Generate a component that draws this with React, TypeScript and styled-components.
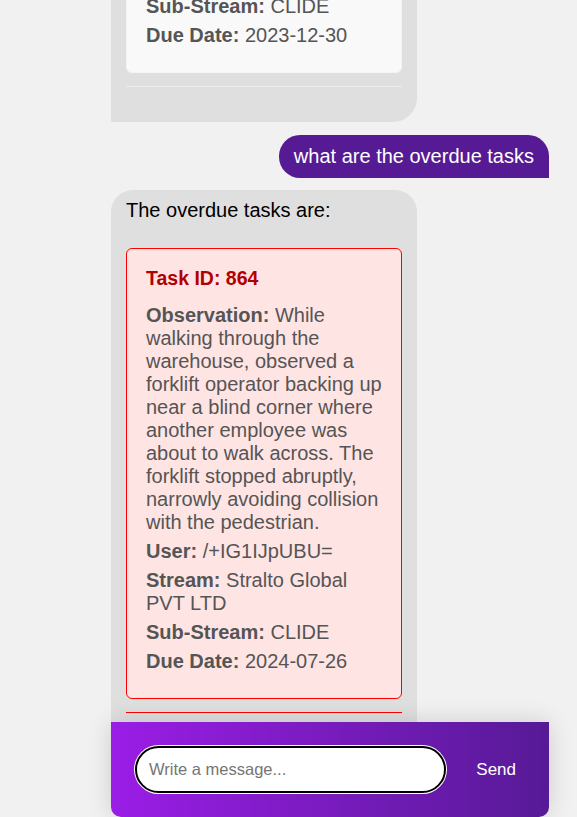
import React from "react";
import styled, { createGlobalStyle } from "styled-components";

const GlobalStyle = createGlobalStyle`
  * { box-sizing: border-box; }
  html, body {
    margin: 0;
    padding: 0;
    height: 100%;
    background: #f1f1f1;
    font-family: "Liberation Sans", Arial, sans-serif;
  }
  body { overflow: hidden; }
`;

const Page = styled.div`
  height: 100vh;
  display: flex;
  padding-left: 111px;
`;

const Chat = styled.div`
  position: relative;
  width: 438px;
  height: 100%;
  display: flex;
  flex-direction: column;
`;

const MessageList = styled.div`
  flex: 1;
  min-height: 0;
  overflow: hidden;
  display: flex;
  flex-direction: column;
  justify-content: flex-end;
  gap: 12px;
  padding-bottom: 69px;
`;

const BotBubble = styled.div`
  flex-shrink: 0;
  align-self: flex-start;
  width: 306px;
  background: #dfdfdf;
  border-radius: 22px 22px 24px 0;
  padding: 9px 15px 35px;
  color: #000;
  font-size: 20px;
  line-height: 23px;
`;

const UserBubble = styled.div`
  flex-shrink: 0;
  align-self: flex-end;
  margin-top: 1px;
  background: #561b94;
  color: #fff;
  border-radius: 21px 21px 0 21px;
  padding: 10px 15px;
  font-size: 20px;
  line-height: 23px;
`;

const Intro = styled.div`
  margin-bottom: 26px;
`;

const TaskCard = styled.div<{ $overdue?: boolean }>`
  background: ${(p) => (p.$overdue ? "#ffe4e4" : "#f9f9f9")};
  border: 1px solid ${(p) => (p.$overdue ? "#ff0000" : "#f4f4f4")};
  border-radius: 6px;
  padding: 18px 17px 25px 19px;
  color: #555;
`;

const TaskTitle = styled.div`
  font-size: 19.5px;
  line-height: 22px;
  font-weight: bold;
  color: #b10000;
  margin-bottom: 15px;
`;

const Field = styled.div`
  & + & {
    margin-top: 6px;
  }
`;

const Label = styled.strong`
  font-weight: bold;
`;

const Divider = styled.div<{ $overdue?: boolean }>`
  height: 1px;
  margin-top: 13px;
  background: ${(p) => (p.$overdue ? "#ff0000" : "#ececec")};
`;

const Composer = styled.form`
  position: absolute;
  left: 0;
  right: 0;
  bottom: 0;
  height: 95px;
  display: flex;
  align-items: center;
  gap: 21px;
  padding: 0 24px;
  background: linear-gradient(to right, #9b1de6, #561a96);
  border-radius: 0 0 10px 10px;
  box-shadow: 0 0 24px rgba(0, 0, 0, 0.15);
`;

const MessageInput = styled.input`
  flex: 1;
  min-width: 0;
  height: 47px;
  border: 2px solid #000;
  border-radius: 24px;
  padding: 0 12px;
  background: #fff;
  box-shadow: 0 0 0 1px #fff;
  font: 16.5px "Liberation Sans", Arial, sans-serif;
  color: #000;
  outline: none;
  &::placeholder {
    color: #757575;
  }
`;

const SendButton = styled.button`
  background: none;
  border: none;
  color: #fff;
  font: 17px "Liberation Sans", Arial, sans-serif;
  padding: 10px 9px;
  cursor: pointer;
`;

type Task = {
  id: number;
  observation: string;
  user: string;
  stream: string;
  subStream: string;
  dueDate: string;
};

const earlierTask: Task = {
  id: 812,
  observation:
    "Noticed a pallet stacked above the safety line in aisle 4, with boxes leaning toward the walkway.",
  user: "/+IG1IJpUBU=",
  stream: "Stralto Global PVT LTD",
  subStream: "CLIDE",
  dueDate: "2023-12-30",
};

const overdueTask: Task = {
  id: 864,
  observation:
    "While walking through the warehouse, observed a forklift operator backing up near a blind corner where another employee was about to walk across. The forklift stopped abruptly, narrowly avoiding collision with the pedestrian.",
  user: "/+IG1IJpUBU=",
  stream: "Stralto Global PVT LTD",
  subStream: "CLIDE",
  dueDate: "2024-07-26",
};

function TaskBlock({ task, overdue }: { task: Task; overdue?: boolean }) {
  return (
    <>
      <TaskCard $overdue={overdue}>
        <TaskTitle>Task ID: {task.id}</TaskTitle>
        <Field>
          <Label>Observation:</Label> {task.observation}
        </Field>
        <Field>
          <Label>User:</Label> {task.user}
        </Field>
        <Field>
          <Label>Stream:</Label> {task.stream}
        </Field>
        <Field>
          <Label>Sub-Stream:</Label> {task.subStream}
        </Field>
        <Field>
          <Label>Due Date:</Label> {task.dueDate}
        </Field>
      </TaskCard>
      <Divider $overdue={overdue} />
    </>
  );
}

export default function App() {
  return (
    <>
      <GlobalStyle />
      <Page>
        <Chat>
          <MessageList>
            <BotBubble>
              <TaskBlock task={earlierTask} />
            </BotBubble>
            <UserBubble>what are the overdue tasks</UserBubble>
            <BotBubble>
              <Intro>The overdue tasks are:</Intro>
              <TaskBlock task={overdueTask} overdue />
            </BotBubble>
          </MessageList>
          <Composer onSubmit={(e) => e.preventDefault()}>
            <MessageInput placeholder="Write a message..." />
            <SendButton type="submit">Send</SendButton>
          </Composer>
        </Chat>
      </Page>
    </>
  );
}
